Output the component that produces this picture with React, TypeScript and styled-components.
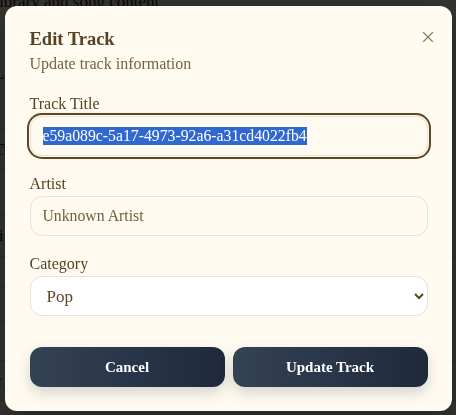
import React, { useEffect, useRef } from "react";
import styled, { createGlobalStyle, css } from "styled-components";
import { X } from "lucide-react";

const Global = createGlobalStyle`
  html, body { margin: 0; padding: 0; }
  body {
    font-family: "Liberation Serif", "Times New Roman", serif;
    background: #fffbf0;
    overflow: hidden;
  }
  * { box-sizing: border-box; }
`;

const Page = styled.div`
  height: 415px;
  background: #fffbf0;
  color: #2f2616;
  overflow: hidden;
`;

const PageHeading = styled.div`
  font-size: 17px;
  line-height: 20px;
  margin: -8px 0 0 -100px;
  white-space: nowrap;
  padding-bottom: 6px;
`;

const PageRow = styled.div<{ $h: number }>`
  height: ${(p) => p.$h}px;
  border-bottom: 1px solid #d9cfb6;
  display: flex;
  align-items: center;
  font-size: 17px;
  margin-left: -6px;
  white-space: nowrap;
`;

const Overlay = styled.div`
  position: fixed;
  inset: 0;
  background: rgba(0, 0, 0, 0.8);
  display: flex;
  justify-content: center;
  align-items: flex-start;
  padding-top: 6px;
`;

const Modal = styled.div`
  position: relative;
  width: 447px;
  background: #fffbf0;
  border-radius: 12px;
  padding: 19px 24px 24px 25px;
  box-shadow: 0 10px 30px rgba(0, 0, 0, 0.3);
`;

const CloseButton = styled.button`
  position: absolute;
  top: 22px;
  right: 15px;
  width: 18px;
  height: 18px;
  padding: 0;
  border: 0;
  background: transparent;
  color: #8c7b5c;
  display: flex;
  align-items: center;
  justify-content: center;
  cursor: pointer;
`;

const Header = styled.div`
  display: flex;
  flex-direction: column;
  gap: 1px;
`;

const Title = styled.h2`
  margin: 0;
  font-size: 18.5px;
  line-height: 28px;
  font-weight: 700;
  color: #574223;
`;

const Subtitle = styled.p`
  margin: 0;
  font-size: 16px;
  line-height: 20px;
  color: #76643f;
`;

const Form = styled.div`
  margin-top: 20px;
  display: flex;
  flex-direction: column;
  gap: 18px;
`;

const Field = styled.div`
  display: flex;
  flex-direction: column;
  gap: 2px;
`;

const Label = styled.label`
  font-size: 16px;
  line-height: 20px;
  color: #574223;
`;

const Input = styled.input<{ $active?: boolean }>`
  height: 40px;
  width: 100%;
  padding: 0 12px;
  border: 1px solid #ebe2cf;
  border-radius: 12px;
  background: #fffbf0;
  font-family: "Liberation Serif", "Times New Roman", serif;
  font-size: 15.75px;
  color: #72603d;
  outline: none;
  ${(p) =>
    p.$active &&
    css`
      box-shadow: 0 0 0 1px #fffbf0, 0 0 0 3px #5b4626;
    `}
  &::selection {
    background: #3168d0;
    color: #ffffff;
  }
`;

const Select = styled.select`
  height: 40px;
  width: 100%;
  padding: 0 12px;
  border: 1px solid #ebe2cf;
  border-radius: 12px;
  background: #ffffff;
  font-family: "Liberation Serif", "Times New Roman", serif;
  font-size: 17px;
  color: #5b4626;
  outline: none;
`;

const Actions = styled.div`
  margin-top: 31px;
  display: flex;
  gap: 8px;
`;

const ActionButton = styled.button`
  flex: 1;
  height: 40px;
  border: 0;
  border-radius: 12px;
  background: linear-gradient(90deg, #344256 0%, #1f293b 100%);
  color: #ffffff;
  font-family: "Liberation Serif", "Times New Roman", serif;
  font-size: 15px;
  font-weight: 700;
  box-shadow: 0 6px 14px rgba(30, 41, 59, 0.18);
  cursor: pointer;
`;

export default function App() {
  const titleRef = useRef<HTMLInputElement>(null);

  useEffect(() => {
    const el = titleRef.current;
    if (el) {
      el.focus();
      el.select();
    }
  }, []);

  return (
    <>
      <Global />
      <Page>
        <PageHeading>Manage your library and song content</PageHeading>
        <PageRow $h={112}>Library</PageRow>
        <PageRow $h={40}>Track list</PageRow>
        <PageRow $h={45}>r</PageRow>
        <PageRow $h={42}>ti</PageRow>
        <PageRow $h={30}>t</PageRow>
        <PageRow $h={35}>s</PageRow>
        <PageRow $h={39}>r</PageRow>
        <PageRow $h={40}>c</PageRow>
      </Page>
      <Overlay>
        <Modal role="dialog">
          <CloseButton aria-label="Close">
            <X size={18} strokeWidth={1.5} />
          </CloseButton>
          <Header>
            <Title>Edit Track</Title>
            <Subtitle>Update track information</Subtitle>
          </Header>
          <Form>
            <Field>
              <Label>Track Title</Label>
              <Input
                ref={titleRef}
                $active
                defaultValue="e59a089c-5a17-4973-92a6-a31cd4022fb4"
              />
            </Field>
            <Field>
              <Label>Artist</Label>
              <Input defaultValue="Unknown Artist" />
            </Field>
            <Field>
              <Label>Category</Label>
              <Select defaultValue="Pop">
                <option>Pop</option>
                <option>Rock</option>
                <option>Jazz</option>
                <option>Classical</option>
              </Select>
            </Field>
          </Form>
          <Actions>
            <ActionButton>Cancel</ActionButton>
            <ActionButton>Update Track</ActionButton>
          </Actions>
        </Modal>
      </Overlay>
    </>
  );
}
